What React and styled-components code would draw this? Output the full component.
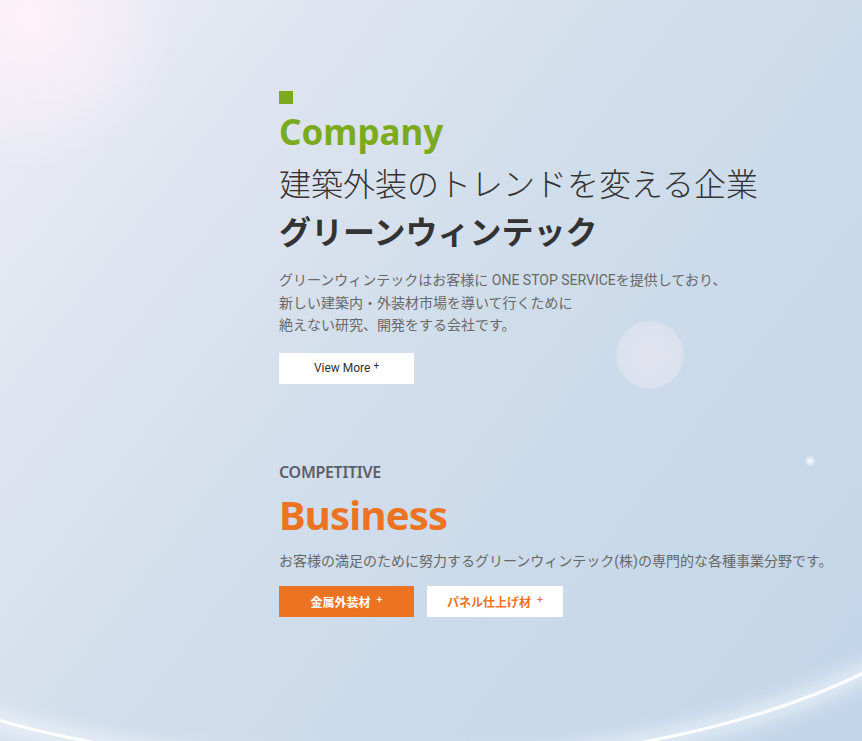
import React from "react";
import styled, { createGlobalStyle } from "styled-components";

const GlobalStyle = createGlobalStyle`
  html, body {
    margin: 0;
    padding: 0;
  }
  body {
    font-family: Roboto, "Noto Sans CJK JP", sans-serif;
    color: #333;
  }
`;

const colors = {
  green: "#7bab1c",
  orange: "#ec7321",
  text: "#333",
  muted: "#686868",
};

const StyledPage = styled.div`
  position: relative;
  width: 100%;
  height: 741px;
  overflow: hidden;
  background:
    radial-gradient(circle at 30px 18px, rgba(255, 242, 250, 0.95) 0, rgba(255, 242, 250, 0) 150px),
    linear-gradient(128deg, #eeedf5 0%, #dde4ef 25%, #d0ddeb 50%, #c8d9ea 75%, #c3d6e9 100%);
`;

const StyledDecor = styled.svg`
  position: absolute;
  top: 0;
  left: 0;
  width: 100%;
  height: 100%;
  pointer-events: none;
`;

const StyledContent = styled.main`
  position: relative;
  display: flex;
  flex-direction: column;
  gap: 78px;
  padding: 91px 0 0 279px;
`;

const StyledSection = styled.section`
  display: flex;
  flex-direction: column;
  align-items: flex-start;
`;

const StyledMark = styled.span`
  width: 14px;
  height: 13px;
  background: ${colors.green};
  margin-bottom: 8px;
`;

const StyledTitle = styled.h2`
  margin: ${({ top }) => top || 0}px 0 0;
  font-family: "Noto Sans", sans-serif;
  font-weight: 700;
  font-size: ${({ size }) => size}px;
  line-height: 40px;
  letter-spacing: ${({ spacing }) => spacing || 0}px;
  color: ${({ color }) => color};
`;

const StyledHeadline = styled.p`
  margin: ${({ first }) => (first ? "6px" : "0")} 0 0;
  font-family: "Noto Sans CJK JP", sans-serif;
  font-size: 32px;
  line-height: 48px;
  font-weight: ${({ bold }) => (bold ? 700 : 300)};
  color: ${colors.text};
`;

const StyledText = styled.p`
  margin: ${({ top }) => top}px 0 0;
  font-family: Roboto, "Noto Sans CJK JP", sans-serif;
  font-size: 14px;
  line-height: 22.5px;
  color: ${colors.muted};
`;

const StyledLabel = styled.div`
  font-family: "Noto Sans", sans-serif;
  font-weight: 600;
  font-size: 16px;
  line-height: 20px;
  color: #5b6066;
  letter-spacing: -0.3px;
`;

const StyledButtonRow = styled.div`
  display: flex;
  gap: 13px;
  margin-top: ${({ top }) => top}px;
`;

const StyledButton = styled.a`
  display: flex;
  align-items: center;
  justify-content: center;
  width: ${({ w }) => w}px;
  height: 31px;
  background: ${({ variant }) => (variant === "orange" ? colors.orange : "#fff")};
  color: ${({ variant }) =>
    variant === "orange" ? "#fff" : variant === "outline" ? colors.orange : colors.text};
  font-family: ${({ variant }) =>
    variant ? '"Noto Sans CJK JP", sans-serif' : 'Roboto, "Noto Sans CJK JP", sans-serif'};
  font-weight: ${({ variant }) => (variant ? 700 : 400)};
  font-size: 12px;
  text-decoration: none;
  cursor: pointer;

  sup {
    font-size: 10px;
    margin-left: ${({ variant }) => (variant ? 6 : 3)}px;
    position: relative;
    top: -3px;
  }
`;

const Decor = () => (
  <StyledDecor viewBox="0 0 862 741" preserveAspectRatio="none">
    <defs>
      <radialGradient id="orb" cx="50%" cy="50%" r="50%">
        <stop offset="0%" stopColor="#e6e6f0" stopOpacity="0.85" />
        <stop offset="92%" stopColor="#e2e4ef" stopOpacity="0.7" />
        <stop offset="100%" stopColor="#e2e4ef" stopOpacity="0" />
      </radialGradient>
      <radialGradient id="dot" cx="50%" cy="50%" r="50%">
        <stop offset="0%" stopColor="#ffffff" stopOpacity="1" />
        <stop offset="100%" stopColor="#ffffff" stopOpacity="0" />
      </radialGradient>
      <filter id="blur" x="-20%" y="-20%" width="140%" height="140%">
        <feGaussianBlur stdDeviation="7" />
      </filter>
    </defs>
    <circle cx="650" cy="355" r="35" fill="url(#orb)" />
    <circle cx="810" cy="461" r="6" fill="url(#dot)" />
    <path
      d="M -40 707 C 150 780, 620 805, 885 662"
      fill="none"
      stroke="#f2f7fc"
      strokeWidth="22"
      opacity="0.55"
      filter="url(#blur)"
    />
    <path
      d="M -40 707 C 150 780, 620 805, 885 662"
      fill="none"
      stroke="#ffffff"
      strokeWidth="3"
    />
  </StyledDecor>
);

const App = () => (
  <>
    <GlobalStyle />
    <StyledPage>
      <Decor />
      <StyledContent>
        <StyledSection>
          <StyledMark />
          <StyledTitle size={35} color={colors.green}>
            Company
          </StyledTitle>
          <StyledHeadline first>建築外装のトレンドを変える企業</StyledHeadline>
          <StyledHeadline bold>グリーンウィンテック</StyledHeadline>
          <StyledText top={15}>
            グリーンウィンテックはお客様に ONE STOP SERVICEを提供しており、
            <br />
            新しい建築内・外装材市場を導いて行くために
            <br />
            絶えない研究、開発をする会社です。
          </StyledText>
          <StyledButtonRow top={16}>
            <StyledButton w={135}>
              View More<sup>+</sup>
            </StyledButton>
          </StyledButtonRow>
        </StyledSection>

        <StyledSection>
          <StyledLabel>COMPETITIVE</StyledLabel>
          <StyledTitle size={40} top={13} spacing={-0.8} color={colors.orange}>
            Business
          </StyledTitle>
          <StyledText top={15}>
            お客様の満足のために努力するグリーンウィンテック(株)の専門的な各種事業分野です。
          </StyledText>
          <StyledButtonRow top={14}>
            <StyledButton w={135} variant="orange">
              金属外装材<sup>+</sup>
            </StyledButton>
            <StyledButton w={136} variant="outline">
              パネル仕上げ材<sup>+</sup>
            </StyledButton>
          </StyledButtonRow>
        </StyledSection>
      </StyledContent>
    </StyledPage>
  </>
);

export default App;
